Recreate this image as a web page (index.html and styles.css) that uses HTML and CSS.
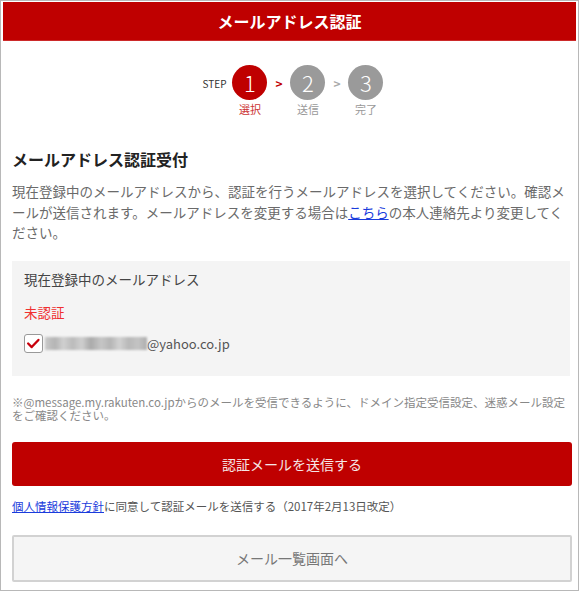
FILE: index.html
```html
<!DOCTYPE html>
<html lang="ja">
<head>
  <meta charset="UTF-8" />
  <meta name="viewport" content="width=device-width, initial-scale=1" />
  <title>メールアドレス認証</title>
  <link rel="stylesheet" href="styles.css">
</head>
<body>
  <div class="frame">
    <h1 class="header">メールアドレス認証</h1>

    <div class="content">
      <div class="steps">
        <span class="step-label">STEP</span>
        <div class="step active">
          <span class="circle">1</span>
          <span class="step-name">選択</span>
        </div>
        <span class="arrow active">&gt;</span>
        <div class="step">
          <span class="circle">2</span>
          <span class="step-name">送信</span>
        </div>
        <span class="arrow">&gt;</span>
        <div class="step">
          <span class="circle">3</span>
          <span class="step-name">完了</span>
        </div>
      </div>

      <h2 class="title">メールアドレス認証受付</h2>
      <p class="lead">現在登録中のメールアドレスから、認証を行うメールアドレスを選択してください。確認メールが送信されます。メールアドレスを変更する場合は<a href="#">こちら</a>の本人連絡先より変更してください。</p>

      <div class="address-box">
        <div class="box-label">現在登録中のメールアドレス</div>
        <div class="status">未認証</div>
        <label class="address-row">
          <span class="checkbox">
            <svg width="19" height="19" viewBox="0 0 19 19"><polyline points="3.5,9.5 7.5,13.5 15,5.5" fill="none" stroke="#c8000c" stroke-width="2.6" stroke-linecap="round" stroke-linejoin="round"/></svg>
          </span>
          <span class="masked"></span><span class="domain">@yahoo.co.jp</span>
        </label>
      </div>

      <p class="note">※@message.my.rakuten.co.jpからのメールを受信できるように、ドメイン指定受信設定、迷惑メール設定をご確認ください。</p>

      <button class="send-button">認証メールを送信する</button>

      <p class="policy"><a href="#">個人情報保護方針</a>に同意して認証メールを送信する（2017年2月13日改定）</p>

      <button class="back-button">メール一覧画面へ</button>
    </div>
  </div>
</body>
</html>
```

FILE: styles.css
```css
html, body {
  margin: 0;
  padding: 0;
  background: #fff;
}

body {
  font-family: "Noto Sans CJK JP", "Noto Sans", sans-serif;
  color: #333;
}

.frame {
  width: 579px;
  height: 591px;
  box-sizing: border-box;
  border: 1px solid #b8b8b8;
  padding: 1px 2px;
}

.header {
  margin: 0;
  height: 39px;
  line-height: 39px;
  background: #bf0000;
  color: #fff;
  font-size: 16px;
  font-weight: bold;
  text-align: center;
  border-bottom: 1px solid #cc2a2a;
  box-sizing: border-box;
}

.content {
  padding: 0 4px 0 9px;
}

/* pasos */
.steps {
  display: flex;
  justify-content: center;
  align-items: flex-start;
  margin-top: 24px;
  padding-left: 2px;
}

.step-label {
  font-size: 10px;
  line-height: 12px;
  margin-top: 13px;
  margin-right: 6px;
  color: #333;
}

.step {
  display: flex;
  flex-direction: column;
  align-items: center;
  width: 35px;
}

.circle {
  width: 35px;
  height: 35px;
  border-radius: 50%;
  background: #9a9a9a;
  color: #fff;
  font-size: 22px;
  font-weight: 300;
  line-height: 35px;
  text-align: center;
}

.step.active .circle {
  background: #bf0000;
}

.step-name {
  margin-top: 1px;
  font-size: 11px;
  line-height: 16px;
  color: #999;
  white-space: nowrap;
}

.step.active .step-name {
  color: #c33;
}

.arrow {
  width: 23px;
  text-align: center;
  font-size: 12px;
  font-weight: bold;
  line-height: 14px;
  margin-top: 12px;
  color: #aaa;
}

.arrow.active {
  color: #bf0000;
}

.title {
  margin: 31px 0 0;
  font-size: 16px;
  line-height: 22px;
  font-weight: bold;
  color: #222;
}

.lead {
  margin: 11px 0 0;
  font-size: 13.5px;
  line-height: 20.5px;
  color: #6a6a6a;
}

.lead a,
.policy a {
  color: #1a3cdc;
  text-decoration: underline;
}

/* caja de direcciones */
.address-box {
  margin: 18px 2px 0 0;
  height: 115px;
  box-sizing: border-box;
  padding: 8px 12px 0;
  background: #f4f4f4;
}

.box-label {
  font-size: 13.5px;
  line-height: 20px;
  color: #444;
}

.status {
  margin-top: 13px;
  font-size: 13.5px;
  line-height: 20px;
  color: #f03030;
}

.address-row {
  display: flex;
  align-items: center;
  margin-top: 12px;
  height: 20px;
}

.checkbox {
  width: 19px;
  height: 19px;
  box-sizing: border-box;
  border: 1px solid #999;
  border-radius: 3px;
  background: #fff;
  display: flex;
  align-items: center;
  justify-content: center;
  margin-right: 2px;
}

.checkbox svg {
  display: block;
}

.masked {
  width: 102px;
  height: 13px;
  background: linear-gradient(90deg, #c9c9c9 0, #b4b4b4 10%, #d0d0d0 18%, #bbb 27%, #cfcfcf 36%, #aaa 45%, #c6c6c6 55%, #b5b5b5 64%, #d2d2d2 73%, #b8b8b8 82%, #c4c4c4 91%, #aeaeae 100%);
  filter: blur(0.8px);
}

.domain {
  font-size: 13px;
  color: #555;
}

.note {
  margin: 20px 0 0;
  font-size: 11.5px;
  line-height: 13px;
  color: #888;
}

button {
  font-family: inherit;
  cursor: pointer;
}

.send-button {
  display: block;
  width: 100%;
  height: 44px;
  margin-top: 20px;
  border: none;
  border-radius: 3px;
  background: #bf0000;
  color: #f6e6e6;
  font-size: 14px;
}

.policy {
  margin: 12px 0 0;
  font-size: 11.5px;
  line-height: 16px;
  color: #555;
}

.back-button {
  display: block;
  width: 100%;
  height: 47px;
  margin-top: 21px;
  border: 2px solid #d2d2d2;
  border-radius: 2px;
  background: #f5f5f5;
  color: #777;
  font-size: 14px;
}
```
